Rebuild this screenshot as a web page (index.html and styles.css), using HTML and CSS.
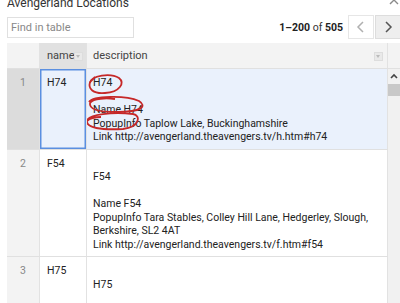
FILE: index.html
```
<!DOCTYPE html>
<html>
	<head>
		<meta charset="UTF-8">
		<title>Avengerland Locations</title>
		<link rel="stylesheet" href="styles.css">
	</head>
	<body>
		<div class="card">
			<div class="title_bar">
				<h1 class="title">Avengerland Locations</h1>
				<svg class="collapse" width="10" height="8" viewBox="0 0 10 8"><polyline points="1,5 5,1 9,5" fill="none" stroke="#8a8a8a" stroke-width="1.4"/></svg>
			</div>
			<div class="toolbar">
				<input class="search" type="text" placeholder="Find in table" />
				<div class="pager">
					<span class="count"><b>1–200</b> of <b>505</b></span>
					<span class="nav prev"><svg width="10" height="12" viewBox="0 0 10 12"><polyline points="7,1 2,6 7,11" fill="none" stroke="#b0b0b0" stroke-width="1.5"/></svg></span>
					<span class="nav next"><svg width="10" height="12" viewBox="0 0 10 12"><polyline points="3,1 8,6 3,11" fill="none" stroke="#555" stroke-width="1.5"/></svg></span>
				</div>
			</div>
			<div class="grid_wrap">
				<div class="grid">
					<div class="row head">
						<div class="cell num"></div>
						<div class="cell name sorted">name<span class="drop"></span></div>
						<div class="cell desc">description<span class="drop"></span></div>
					</div>
					<div class="row selected">
						<div class="cell num">1</div>
						<div class="cell name active">H74</div>
						<div class="cell desc">
							H74<br><br>Name H74<br>PopupInfo Taplow Lake, Buckinghamshire<br>Link http://avengerland.theavengers.tv/h.htm#h74
							<svg class="marks" width="120" height="70" viewBox="0 0 120 70">
								<path d="M3,14 C4,6 24,4 32,9 C38,14 33,23 18,24 C6,25 1,20 3,13 L8,8" fill="none" stroke="#c62828" stroke-width="1.8"/>
								<path d="M2,33 C6,27 38,26 52,32 C60,37 55,43 30,43 C10,43 2,40 3,34 C6,29 20,29 28,30" fill="none" stroke="#c62828" stroke-width="1.8"/>
								<path d="M0,52 C1,45 26,43 46,45 C54,46 53,58 36,60 C14,61 -1,59 0,52 C3,49 10,48 14,48" fill="none" stroke="#c62828" stroke-width="1.8"/>
							</svg>
						</div>
					</div>
					<div class="row">
						<div class="cell num">2</div>
						<div class="cell name">F54</div>
						<div class="cell desc"><br>F54<br><br>Name F54<br>PopupInfo Tara Stables, Colley Hill Lane, Hedgerley, Slough, Berkshire, SL2 4AT<br>Link http://avengerland.theavengers.tv/f.htm#f54</div>
					</div>
					<div class="row">
						<div class="cell num">3</div>
						<div class="cell name">H75</div>
						<div class="cell desc"><br>H75<br><br>Name H75<br>PopupInfo Cliveden House, Taplow, Buckinghamshire<br>Link http://avengerland.theavengers.tv/h.htm#h75</div>
					</div>
				</div>
				<div class="scrollbar">
					<div class="scroll_head"></div>
					<div class="track">
						<svg class="arrow" width="8" height="6" viewBox="0 0 8 6"><polyline points="1,5 4,2 7,5" fill="none" stroke="#444" stroke-width="1.6"/></svg>
						<div class="thumb"></div>
					</div>
				</div>
			</div>
		</div>
	</body>
</html>
```
FILE: styles.css
```
body,h1,p{
	margin: 0;
	padding: 0;
}
body{
	background-color: #fff;
	font-family: Roboto, "Liberation Sans", sans-serif;
	font-size: 11px;
	color: #222;
	overflow: hidden;
}
.card{
	width: 400px;
	height: 303px;
	overflow: hidden;
}
.title_bar{
	display: flex;
	justify-content: space-between;
	align-items: flex-start;
	height: 14px;
	padding-left: 7px;
}
.title{
	font-size: 12px;
	font-weight: normal;
	line-height: 14px;
	margin-top: -4px;
	color: #333;
}
.collapse{
	margin-right: 1px;
	margin-top: -1px;
}
.toolbar{
	display: flex;
	justify-content: space-between;
	align-items: center;
	height: 26px;
	padding-left: 7px;
}
.search{
	width: 127px;
	height: 21px;
	box-sizing: border-box;
	border: 1px solid #e0e0e0;
	padding: 0 3px;
	font-family: Roboto, "Liberation Sans", sans-serif;
	font-size: 11px;
	color: #222;
	outline: none;
}
.search::placeholder{
	color: #888;
}
.pager{
	display: flex;
	align-items: center;
	margin-right: -1px;
}
.count{
	font-size: 10.5px;
	color: #333;
	margin-right: 5px;
}
.count b{
	font-weight: bold;
	color: #222;
}
.nav{
	display: flex;
	align-items: center;
	justify-content: center;
	width: 26px;
	height: 24px;
	box-sizing: border-box;
	border: 1px solid #e6e6e6;
}
.prev{
	background-color: #fff;
}
.next{
	background-color: #eee;
	border-color: #ddd;
	margin-left: 1px;
}
.grid_wrap{
	display: flex;
	margin-top: 3px;
	padding-left: 7px;
}
.grid{
	flex: 1;
}
.row{
	display: grid;
	grid-template-columns: 33px 47px 1fr;
	border-bottom: 1px solid #e0e0e0;
}
.cell{
	position: relative;
	padding: 7px 6px 5px 6px;
	font-size: 10.5px;
	line-height: 13.5px;
	border-right: 1px solid #e2e2e2;
}
.cell.num{
	background-color: #f3f3f3;
	color: #888;
	text-align: center;
	padding-left: 0;
	padding-right: 0;
}
.cell.name{
	padding-left: 7px;
}
.head .cell{
	height: 25px;
	box-sizing: border-box;
	padding-top: 6px;
	padding-bottom: 0;
	font-size: 11px;
	background-color: #f3f3f3;
	color: #444;
}
.head .sorted{
	background-color: #e1e1e1;
}
.drop{
	position: absolute;
	right: 4px;
	top: 9px;
	width: 7px;
	height: 7px;
	background-color: #e9e9e9;
	border: 1px solid #ddd;
}
.drop:after{
	content: "";
	position: absolute;
	left: 1px;
	top: 2px;
	border-left: 2.5px solid transparent;
	border-right: 2.5px solid transparent;
	border-top: 3px solid #bbb;
}
.head .sorted .drop{
	right: 3px;
}
.selected .cell{
	background-color: #eaf1fc;
}
.selected .cell.num{
	background-color: #dcdcdc;
}
.cell.active{
	box-shadow: inset 0 0 0 1.5px #5b8fe0;
}
.marks{
	position: absolute;
	left: 0;
	top: 0;
	pointer-events: none;
}
.scrollbar{
	width: 12px;
	flex: none;
	display: flex;
	flex-direction: column;
}
.scroll_head{
	height: 25px;
	background-color: #f3f3f3;
	border-bottom: 1px solid #e0e0e0;
}
.track{
	flex: 1;
	background-color: #f1f1f1;
	display: flex;
	flex-direction: column;
	align-items: center;
}
.arrow{
	margin-top: 4px;
}
.thumb{
	width: 12px;
	height: 12px;
	margin-top: 5px;
	background-color: #c8c8c8;
}
```
